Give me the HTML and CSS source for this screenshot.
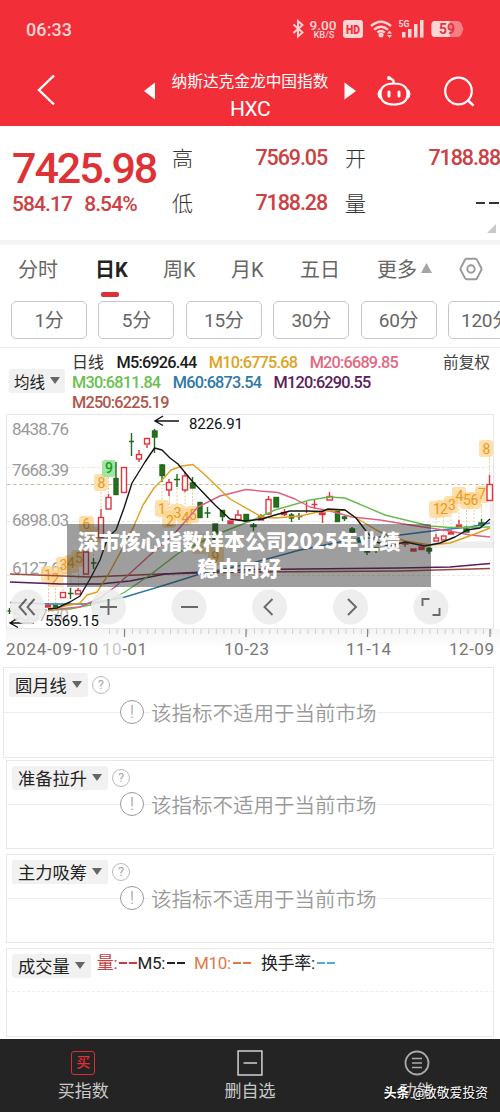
FILE: index.html
```html
<!DOCTYPE html>
<html lang="zh-CN">
<head>
<meta charset="utf-8">
<title>HXC</title>
<link rel="stylesheet" href="styles.css">
</head>
<body>
<div class="app">
  <header class="top">
    <div class="status">
      <span class="clock">06:33</span>
      <svg class="status-icons" width="176" height="24" viewBox="290 17 176 24">
        <path d="M293.5 24.500l9 8-4.500 4V21l4.500 4-9 8" fill="none" stroke="#ffd5d7" stroke-width="1.900"/>
        <g fill="#ffd5d7" font-weight="500">
          <text x="309.500" y="30" font-size="13" textLength="27" lengthAdjust="spacingAndGlyphs">9.00</text>
          <text x="313.500" y="38" font-size="9" textLength="21" lengthAdjust="spacingAndGlyphs">KB/S</text>
          <rect x="343" y="20" width="20" height="18" rx="3"/>
          <text x="346" y="33.500" font-size="12" font-weight="900" fill="#f22f38" textLength="14" lengthAdjust="spacingAndGlyphs">HD</text>
          <text x="398.500" y="27" font-size="9" font-weight="700" textLength="11" lengthAdjust="spacingAndGlyphs">5G</text>
          <rect x="402" y="32" width="3.500" height="5.500"/><rect x="408" y="29" width="3.500" height="8.500"/>
          <rect x="414" y="24" width="3.500" height="13.500"/><rect x="420" y="20" width="3.500" height="17.500"/>
          <circle cx="381" cy="35" r="2.500"/>
          <path d="M387 33.500l2.500-3 2.500 3zM387 35l2.500 3 2.500-3z"/>
        </g>
        <path d="M371 26q10-8.500 20 0M374 29.700q7-6 14 0M377.300 32.500q3.700-3 7.400 0" fill="none" stroke="#ffd5d7" stroke-width="2.300"/>
        <path d="M435 21h22q4 0 5 4l1.500 4-1.500 4q-1 4-5 4h-22q-3.500 0-3.500-4v-8q0-4 3.500-4z" fill="#f97f84"/>
        <path d="M435 21h15v16h-15q-3.500 0-3.500-4v-8q0-4 3.500-4z" fill="#ffd5d7"/>
        <text x="439" y="34" font-size="14" font-weight="700" fill="#e2353e" textLength="16" lengthAdjust="spacingAndGlyphs">59</text>
      </svg>
    </div>
    <nav class="title-bar">
      <svg class="back" width="20" height="32" viewBox="0 0 20 32"><path d="M18 1.500L3 16l15 14.500" fill="none" stroke="#fff" stroke-width="2.400"/></svg>
      <svg class="prev" width="12" height="18" viewBox="0 0 12 18"><path d="M11 .5v17L0 9z" fill="#fff"/></svg>
      <div class="titles"><span class="name">纳斯达克金龙中国指数</span><span class="code">HXC</span></div>
      <svg class="next" width="12" height="18" viewBox="0 0 12 18"><path d="M.5.5v17L12 9z" fill="#fff"/></svg>
      <svg class="bot" width="36" height="32" viewBox="0 0 36 32"><g fill="none" stroke="#fff" stroke-width="2.200"><path d="M18 8.500c9 0 13.500 3.500 13.500 10.500S27 29.500 18 29.500 4.500 26 4.500 19 9 8.500 18 8.500zM17.500 8V5.500L14 3"/></g><path d="M4 14v10Q1.500 22 1.500 19T4 14zM32 14v10q2.500-2 2.500-5T32 14z" fill="#fff"/><circle cx="13" cy="3" r="2" fill="#fff"/><rect x="11.500" y="15.500" width="3" height="7" rx="1.500" fill="#fff"/><rect x="21.500" y="15.500" width="3" height="7" rx="1.500" fill="#fff"/></svg>
      <svg class="search" width="32" height="32" viewBox="0 0 32 32"><circle cx="15.500" cy="15" r="13.300" fill="none" stroke="#fff" stroke-width="2.200"/><path d="M24.500 24l6 5.500" stroke="#fff" stroke-width="2.400"/></svg>
    </nav>
  </header>

  <section class="quote">
    <div class="price-block">
      <div class="price">7425.98</div>
      <div class="change"><span>584.17</span><span>8.54%</span></div>
    </div>
    <div class="stats">
      <span class="label">高</span><span class="num">7569.05</span><span class="label">开</span><span class="num">7188.88</span>
      <span class="label">低</span><span class="num">7188.28</span><span class="label">量</span><svg class="none" width="25" height="4" viewBox="0 0 25 4"><path d="M1 2h9M14 2h10" stroke="#333" stroke-width="1.800"/></svg>
    </div>
    <svg class="corner" width="9" height="9" viewBox="0 0 9 9"><path d="M9 0v9H0z" fill="#c8c8c8"/></svg>
  </section>

  <section class="periods">
    <div class="tabs">
      <span class="tab">分时</span><span class="tab active">日K</span><span class="tab">周K</span><span class="tab">月K</span><span class="tab">五日</span>
      <span class="tab more">更多<svg width="11" height="10" viewBox="0 0 11 10"><path d="M5.500 0L11 10H0z" fill="#a5a5a5"/></svg></span>
      <svg class="gear" width="24" height="24" viewBox="0 0 24 24" fill="none" stroke="#999" stroke-width="1.900"><path d="M7.500 1.800h9q1 0 1.500 1l4.300 8.200q.5 1 0 2L18 21.200q-.5 1-1.500 1h-9q-1 0-1.500-1L1.700 13q-.5-1 0-2L6 2.800q.5-1 1.500-1z"/><circle cx="12" cy="12" r="3.700"/></svg>
    </div>
    <div class="pills"><span>1分</span><span>5分</span><span>15分</span><span>30分</span><span>60分</span><span>120分</span></div>
  </section>

  <section class="legend">
    <span class="tag">均线<i class="caret"></i></span>
    <div class="averages">
      <div><span class="day">日线</span><span class="m5">M5:6926.44</span><span class="m10">M10:6775.68</span><span class="m20">M20:6689.85</span></div>
      <div><span class="m30">M30:6811.84</span><span class="m60">M60:6873.54</span><span class="m120">M120:6290.55</span></div>
      <div><span class="m250">M250:6225.19</span></div>
    </div>
    <span class="adjust">前复权</span>
  </section>

  <section class="chart">
    <svg width="500" height="253" viewBox="0 411 500 253">
      <defs><linearGradient id="axisbg" x2="0" y2="1"><stop offset="0" stop-color="#f4f4f4"/><stop offset="1" stop-color="#fff"/></linearGradient></defs>
      <rect x="6" y="629" width="494" height="20" fill="url(#axisbg)"/>
      <path d="M431 541.500h62v6.500h-62z" fill="#eee"/>
      <rect x="490" y="500" width="4" height="41" fill="#f0f0f0"/>
      <path d="M6.500 628.500v-214h487v214z" fill="none" stroke="#e6e6e6"/>
      <path d="M7 467.500h486M7 521.500h486M7 575.500h486" stroke="#e8e8e8" stroke-dasharray="3 2"/>
      <path d="M7 484.500h486" stroke="#c9c0a0" stroke-dasharray="3.500 2.500"/>
      <g class="ylabels">
        <text x="12" y="435" textLength="57">8438.76</text><text x="12" y="476" textLength="57">7668.39</text><text x="12" y="525.500" textLength="57">6898.03</text><text x="12" y="574" textLength="57">6127.66</text><text x="12" y="620.500" textLength="57" opacity=".65">5357.30</text>
      </g>
      <g stroke="#e0cf9a" stroke-dasharray="2 1.500">
        <path d="M48.500 585v20M55.500 588v18M63 575v18M71 573v18M78.500 570v20M101 492v18M108.500 477v18M86 530v22M93.500 526v34M162 484v16M169.500 496v24M177 488v22M185 492v26M192.500 489v22M436 518v20M443.500 516v20M451 512v20M459 505v18M466.500 510v18M474 510v18M481.500 504v18M489.500 458v18"/>
      </g>
      <g class="badge">
        <rect x="41" y="566" width="15" height="17" rx="3"/><rect x="48" y="571" width="15" height="16" rx="3"/><rect x="56" y="557" width="15" height="18" rx="3"/><rect x="64" y="555" width="15" height="18" rx="3"/><rect x="71" y="550" width="14" height="17" rx="3"/><rect x="79" y="516" width="15" height="17" rx="3"/><rect x="87" y="527" width="15" height="16" rx="3"/>
        <rect x="94" y="474" width="14" height="17" rx="3"/><rect x="155" y="500" width="14" height="17" rx="3"/><rect x="162" y="511" width="14" height="17" rx="3"/><rect x="170" y="504" width="14" height="17" rx="3"/><rect x="177" y="508" width="15" height="17" rx="3"/><rect x="186" y="506" width="13" height="17" rx="3"/><rect x="192" y="534" width="16" height="20" rx="3"/><rect x="208" y="545" width="16" height="20" rx="3"/>
        <rect x="429" y="501" width="14" height="17" rx="3"/><rect x="436" y="500" width="15" height="17" rx="3"/><rect x="444" y="496" width="14" height="17" rx="3"/><rect x="452" y="487" width="14" height="17" rx="3"/><rect x="460" y="492" width="14" height="17" rx="3"/><rect x="467" y="492" width="14" height="17" rx="3"/><rect x="475" y="486" width="14" height="17" rx="3"/><rect x="479" y="440" width="14" height="17" rx="3"/>
      </g>
      <rect x="102" y="460" width="14" height="17" rx="3" fill="#9fe6a4"/>
      <g class="count">
        <text x="48" y="580">1</text><text x="55.500" y="584">2</text><text x="63.500" y="570">3</text><text x="71" y="568">4</text><text x="79" y="563">5</text><text x="86.500" y="529">6</text><text x="101.500" y="487.500">8</text>
        <text x="162" y="514">1</text><text x="170" y="525.500">2</text><text x="177.500" y="518">3</text><text x="185.500" y="522.500">4</text><text x="193" y="519.500">5</text><text x="215.500" y="562">9</text>
        <text x="437" y="513.500">1</text><text x="444" y="513.500">2</text><text x="452" y="509.500">3</text><text x="459.500" y="500.500">4</text><text x="467" y="505">5</text><text x="474.500" y="505">6</text><text x="482" y="499">7</text><text x="486.500" y="453.500">8</text>
      </g>
      <text x="109" y="473" font-size="14" font-weight="500" text-anchor="middle" fill="#139e18">9</text>

      <g stroke="#e0353a" fill="#fff" stroke-width="1.400">
        <path d="M139 450v5M139 459v3M147 445v3M169 479v4M169 490v6M185 472v4M185 490v2M101 509v8M108.500 494v3M238 510v5M261 514v2M268.500 496v3M268.500 514v1M284.500 509v7M306.500 502v11M314.500 500v9M311.500 504.500h6M322.500 514v9M329.500 492v4M459 520v4M436 534v3M451 530v3M489.500 475v9M48 603v3M78 588v3M405 541v6"/>
        <rect x="136.500" y="454.500" width="5" height="4.500"/><rect x="144.500" y="438.500" width="5" height="5.500"/><rect x="166.500" y="482.500" width="5" height="7.500"/><rect x="182.500" y="476" width="5" height="14"/><rect x="106" y="497.500" width="5" height="11.500"/><rect x="121.500" y="467.500" width="5" height="25"/><rect x="98.500" y="517.500" width="5" height="20"/><rect x="83.500" y="552" width="5" height="22"/>
        <rect x="235.500" y="515" width="5.500" height="4.500"/><rect x="266" y="499.500" width="5" height="14.500"/><rect x="327" y="496.500" width="5.500" height="3.500"/><rect x="487" y="484.500" width="5.500" height="16"/><rect x="75.500" y="590.500" width="5" height="3.500"/><rect x="60.500" y="592.500" width="5" height="5"/><rect x="434" y="538" width="4.500" height="3"/><rect x="441.500" y="536" width="4.500" height="4"/>
        <g fill="#e0353a"><rect x="45.500" y="605.500" width="5" height="1.500"/><rect x="228" y="521" width="5" height="2.500"/><rect x="258.500" y="516" width="5" height="4"/><rect x="281.500" y="512.500" width="5" height="2"/><rect x="319.500" y="513" width="5.500" height="1.500"/><rect x="411" y="549" width="5" height="2"/><rect x="419" y="547" width="5" height="2.500"/><rect x="403" y="543" width="5" height="1"/><rect x="456.500" y="525" width="5" height="2"/><rect x="448.500" y="532" width="5" height="2"/></g>
      </g>
      <g stroke="#1f6b1b" fill="#2b6d1c" stroke-width="1.400">
        <path d="M131.500 433v23M129 441.500h5M154.500 429v24M162 464v18M177 474v13M174 479.500h6M192.500 477v6M207.500 507v11M204.500 513h6M116 462v33M253.500 523v8M291.500 513v9M299 513v7M296.500 516.500h6M344.500 516v5M352 527v8M93.500 558v11M91 563h5.500M70.500 588v11M68 593.500h5.500M9.500 608v6M7.500 611h4M367 548v7M376 547v6M429 547v7M466.500 526v6M481.500 519v6M222.500 516v5"/>
        <rect x="152.500" y="431" width="4.500" height="6"/><rect x="160" y="465" width="4.500" height="10.500"/><rect x="190.500" y="483" width="4.500" height="5"/><rect x="198" y="502.500" width="4" height="15"/><rect x="213" y="524" width="4.500" height="17"/><rect x="220.500" y="510.500" width="4" height="6"/><rect x="114" y="478.500" width="4" height="16"/><rect x="244" y="514.500" width="4.500" height="7"/><rect x="251" y="525" width="5" height="1.500"/><rect x="274" y="497.500" width="4.500" height="9.500"/><rect x="289.500" y="515" width="4" height="3"/><rect x="335.500" y="511.500" width="4" height="10"/><rect x="342.500" y="517" width="4" height="1.500"/><rect x="350" y="529" width="4.500" height="3"/><rect x="358" y="538" width="4" height="4"/><rect x="365" y="550" width="4.500" height="2"/><rect x="374" y="548" width="4.500" height="2"/><rect x="427" y="548.500" width="4.500" height="2.500"/><rect x="464" y="529" width="5" height="3"/><rect x="479" y="523" width="5" height="2"/><rect x="53.500" y="605.500" width="4" height="1.500"/>
      </g>

      <g class="lines">
        <polyline stroke="#9c4a42" points="10,574 90,577 160,574 250,572 400,571 490,568.500"/>
        <polyline stroke="#5a1c5c" points="10,582 60,584 100,584 130,581 165,574 250,569.500 400,568 450,567 490,563.500"/>
        <polyline stroke="#2f79a8" points="10,602.500 50,604 85,604 110,600 125,597 165,585 200,574 250,563.500 300,550 350,540 400,535 440,530 470,527 490,523"/>
        <polyline stroke="#66bd4e" points="48,610 70,609 90,605 110,600 125,592 150,575 180,552 220,533 253,520 275,510 310,500 329,497 345,498 385,515 430,526 450,527.500 490,527"/>
        <polyline stroke="#df6080" points="48,610 80,607 100,598 115,587 150,555 175,533 198,507 220,496 246,489.500 260,491 278,492.500 295,499 310,507 330,511 352,517 380,520 410,525 450,531 470,535 490,537"/>
        <polyline stroke="#e0a01e" points="48,611 65,606 80,603 87,595 97,592 108,575 120,553 133,528 143,505 154,488 163,479 171,470 182,466 193,464.500 203,473 230,499 262,517 275,518 300,516 322,511 345,510 356,518 380,532 405,541 430,545 450,543 475,534 490,528"/>
        <polyline stroke="#151515" points="48,609 57,608 70,602 80,596 90,579 100,560 108,537 116,530 124,508 132,483 145,462 154.500,448 162,450 170,458 178,464 192,481 215,505 230,519 245,521 262,519 275,515 290,511 307,511 322,511.500 328,509 345,510 356,518 366,531 376,542 390,546 405,542 425,546 440,543 455,537 467,530 480,528 490,519"/>
      </g>
      <path d="M179 421h-24M163 416l-8 5 8 4.500M34 623H10M18 618l-8 5 8 4.500" fill="none" stroke="#111" stroke-width="1.400"/>
      <text class="mark" x="189" y="429" textLength="54">8226.91</text>
      <g opacity=".88"><g fill="#ececec"><circle cx="27.500" cy="607" r="17.500"/><circle cx="108.500" cy="607" r="17.500"/><circle cx="189" cy="607" r="17.500"/><circle cx="269.500" cy="607" r="17.500"/><circle cx="350.500" cy="607" r="17.500"/><circle cx="431" cy="607" r="17.500"/></g>
      <path d="M26.500 599l-7 8 7 8M34.500 599l-7 8 7 8M100 607h17M108.500 599v16M181 607h17M272.500 599l-8 8 8 8M348 599l8 8-8 8M422.500 606v-7h7M432.500 615h7v-7" fill="none" stroke="#555" stroke-width="1.900"/></g>
      <text class="mark" x="45" y="626" textLength="54">5569.15</text>
      <path d="M109 631.500h385" stroke="#cfcfcf" stroke-width="5" stroke-dasharray="1 6.630"/>
      <path d="M124.500 629v8M246 629v8M367.500 629v8M490 629v8" stroke="#888" stroke-width="1.200"/>
      <g class="xlabels"><text x="6" y="654.500" textLength="92">2024-09-10</text><text x="102" y="654.500" textLength="45"><tspan fill="#c9c9c9">10</tspan>-01</text><text x="224" y="654.500" textLength="45">10-23</text><text x="346" y="654.500" textLength="45">11-14</text><text x="449" y="654.500" textLength="45">12-09</text></g>
    </svg>
    <div class="caption">深市核心指数样本公司2025年业绩<br>稳中向好</div>
  </section>

  <section class="panel first">
    <div class="panel-head"><span class="tag">圆月线<i class="caret"></i></span><span class="help">?</span></div>
    <div class="notice"><span class="warn">!</span><span>该指标不适用于当前市场</span></div>
  </section>
  <section class="panel second">
    <div class="panel-head"><span class="tag">准备拉升<i class="caret"></i></span><span class="help">?</span></div>
    <div class="notice"><span class="warn">!</span><span>该指标不适用于当前市场</span></div>
  </section>
  <section class="panel third">
    <div class="panel-head"><span class="tag">主力吸筹<i class="caret"></i></span><span class="help">?</span></div>
    <div class="notice"><span class="warn">!</span><span>该指标不适用于当前市场</span></div>
  </section>
  <section class="panel volume">
    <div class="panel-head"><span class="tag">成交量<i class="caret"></i></span>
      <div class="vol-values"><span class="v1">量:<b></b><b></b></span><span class="v2">M5:<b></b><b></b></span><span class="v3">M10:<b></b><b></b></span><span class="v4">换手率:<b></b><b></b></span></div>
    </div>
    <div class="midline"></div>
  </section>

  <footer class="bottom">
    <div class="action"><span class="buy">买</span><span>买指数</span></div>
    <div class="action"><svg width="24" height="24" viewBox="0 0 24 24" fill="none" stroke="#d0d0d0" stroke-width="1.400"><path d="M1 1h22v22H1zM6 12h12.500"/></svg><span>删自选</span></div>
    <div class="action"><svg width="26" height="26" viewBox="0 0 26 26" fill="none" stroke="#aaa" stroke-width="1.800"><circle cx="13" cy="13" r="11.500"/><path d="M8 8.500h10M8 13h10M8 17.500h10" stroke-width="1.500"/></svg><span>功能</span></div>
    <div class="watermark"><strong>头条</strong> @敬敬爱投资</div>
  </footer>
</div>
</body>
</html>
```

FILE: styles.css
```css
* { box-sizing: border-box; }
body { margin: 0; background: #fff; font-family: Roboto, "Noto Sans CJK SC", sans-serif; color: #333; }
svg { display: block; flex: none; }
.app { width: 500px; height: 1112px; overflow: hidden; display: flex; flex-direction: column; }
.app > * { flex: none; }

.top { height: 126px; background: #f22f38; color: #fff; }
.status { height: 56px; padding: 17px 34px 0 26px; display: flex; justify-content: space-between; }
.clock { font-size: 18px; line-height: 25px; letter-spacing: .1px; font-weight: 500; color: #ffd5d7; }
.status-icons text { font-family: Roboto, sans-serif; }
.title-bar { display: flex; height: 70px; padding-left: 36px; align-items: flex-start; }
.back { margin-top: 18px; }
.prev { margin: 26px 0 0 88px; }
.titles { width: 188px; display: flex; flex-direction: column; align-items: center; }
.name { font-size: 15.700px; line-height: 22px; margin-top: 15px; white-space: nowrap; }
.code { font-size: 21px; line-height: 24px; margin-top: 4px; letter-spacing: -.6px; }
.next { margin-top: 26px; }
.bot { margin: 19px 0 0 20px; }
.search { margin: 20px 0 0 31px; }

.quote { height: 119px; border-bottom: 5px solid #f4f4f4; padding-left: 12px; display: flex; position: relative; }
.price-block { width: 160px; padding-top: 18px; white-space: nowrap; }
.price { font-size: 43px; line-height: 48px; font-weight: 500; color: #df3236; letter-spacing: -2.050px; }
.change { display: flex; gap: 12px; font-size: 21px; line-height: 24px; font-weight: 500; color: #cc4143; letter-spacing: -.9px; }
.stats { width: 328px; height: 90px; padding-top: 9px; display: grid; grid-template-columns: 32px 123px 35px 138px; grid-template-rows: 45px 45px; align-items: center; }
.label { font-size: 21px; font-weight: 300; color: #333; position: relative; top: -1px; }
.stats .label:nth-child(4n+3) { padding-left: 18px; }
.stats .num { justify-self: end; font-size: 21.500px; font-weight: 500; color: #cc4143; letter-spacing: -1.100px; }
.none { justify-self: end; }
.corner { position: absolute; right: 4px; bottom: 7px; }

.periods { height: 103px; border-bottom: 1px solid #eaeaea; }
.tabs { display: flex; height: 49px; padding-left: 18px; }
.tab { font-size: 20px; line-height: 50px; color: #666; width: 61px; white-space: nowrap; margin-right: 11px; }
.tab:nth-child(1) { width: 77px; margin: 0; }
.tab:nth-child(2) { width: 68px; margin: 0; }
.tab:nth-child(3) { width: 68px; margin: 0; }
.tab:nth-child(4) { width: 69px; margin: 0; }
.tab:nth-child(5) { width: 77px; margin: 0; }
.tab.more { display: flex; gap: 4px; width: 82px; margin: 0; }
.more svg { margin-top: 18px; }
.tab.active { color: #222; font-weight: 700; position: relative; }
.active::after { content: ""; position: absolute; left: 6px; bottom: -3px; width: 18px; height: 5px; border-radius: 2px; background: #dc3237; }
.gear { margin-top: 12px; }
.pills { display: flex; gap: 11.400px; padding: 7px 0 0 11px; overflow: hidden; }
.pills span { flex: none; width: 76px; height: 38px; border: 1px solid #c6c6c6; border-radius: 5px; text-align: center; font-size: 19px; line-height: 38px; color: #666; letter-spacing: -.3px; white-space: nowrap; }

.legend { height: 63px; display: flex; padding-left: 9px; }
.tag { display: inline-flex; align-items: center; gap: 5px; height: 24px; padding: 0 6px 1px; background: #f1f1f1; border-radius: 3px; color: #222; white-space: nowrap; }
.caret { width: 0; height: 0; border: 5px solid transparent; border-top: 7px solid #666; border-bottom: 0; }
.legend .tag { width: 56px; margin: 21px 7px 0 0; padding: 0 5px 1px; font-size: 15.500px; }
.averages { width: 371px; padding-top: 5px; font-size: 16.300px; font-weight: 500; letter-spacing: -.8px; }
.averages div { display: flex; gap: 12.500px; height: 20px; line-height: 20px; white-space: nowrap; }
.averages .day { font-weight: 400; font-size: 16px; letter-spacing: 0; }
.m5 { color: #1c1c1c; } .m10 { color: #e0a322; } .m20 { color: #e26882; }
.m30 { color: #6abf50; } .m60 { color: #2f78a6; } .m120 { color: #5b205c; } .m250 { color: #b1554a; }
.adjust { font-size: 15.700px; line-height: 22px; padding-top: 4px; color: #444; }

.chart { position: relative; height: 253px; }
.chart text { font-family: Roboto, sans-serif; }
.ylabels { fill: #999; font-size: 17px; }
.xlabels { fill: #777; font-size: 17px; }
.mark { fill: #111; font-size: 15px; }
.badge { fill: #ffd38c; fill-opacity: .72; }
.count { fill: #e89a20; font-size: 14px; text-anchor: middle; }
.lines { fill: none; stroke-width: 1.400; stroke-linejoin: round; }
.caption { position: absolute; left: 67px; top: 113px; width: 364px; height: 63px; padding: 3px 20px 0 0; background: rgba(40,40,40,.45); color: #fff; text-align: center; font: 900 20.900px/27px "Noto Sans CJK SC", sans-serif; white-space: nowrap; }

.panel { border: 1px solid #e8e8e8; margin: 0 6px 0 6px; position: relative; }
.panel-head { display: flex; align-items: center; padding: 5px 0 0 5px; }
.panel .tag { font-size: 17.300px; }
.first { height: 91px; margin: 3px 6px 0 3px; }
.second { height: 89px; margin-top: 2px; }
.third { height: 89px; margin-top: 5px; }
.volume { height: 89px; margin-top: 5px; }
.help { width: 18px; height: 18px; border: 1.500px solid #bbb; border-radius: 50%; margin-left: 4px; color: #aaa; font-size: 13px; line-height: 16px; text-align: center; }
.notice { display: flex; align-items: center; height: 30px; padding-left: 113px; gap: 7px; color: #999; font-size: 20.500px; font-weight: 350; white-space: nowrap; background: linear-gradient(#eee,#eee) 0 15px / 100% 1px no-repeat; }
.second .notice, .third .notice { margin-top: -1px; }
.notice span:last-child { background: #fff; }
.first .notice { padding-left: 116px; }
.warn { width: 24px; height: 24px; border: 1.500px solid #999; border-radius: 50%; background: #fff; text-align: center; line-height: 21px; font-size: 18px; }
.vol-values { display: flex; font-size: 17px; line-height: 22px; padding-left: 6px; white-space: nowrap; margin-top: -7px; letter-spacing: -.3px; }
.vol-values span { display: flex; align-items: center; }
.vol-values b { width: 8px; height: 2px; margin-left: 2px; background: currentColor; }
.v1 { color: #c43e40; } .v2 { color: #222; } .v3 { color: #e27745; margin-left: 9px; } .v4 { color: #222; margin-left: 10px; }
.vol-values .v4 b { background: #4faedb; }
.midline { border-top: 1px dashed #eee; margin-top: 13px; }

.bottom { height: 74px; margin-top: 2px; background: #242424; display: flex; position: relative; padding-top: 11px; }
.action { flex: 1; display: flex; flex-direction: column; align-items: center; font-size: 17px; line-height: 24px; color: #c9c9c9; }
.action > :first-child { width: 26px; height: 26px; margin-bottom: 3px; }
.action .buy { width: 24px; height: 24px; margin: 1px 0 4px; border: 1.500px solid #d92d38; border-radius: 3px; color: #e32f3a; font-size: 14px; line-height: 21px; text-align: center; font-weight: 500; }
.watermark { position: absolute; right: 12px; top: 44px; color: #fff; font-size: 12.800px; line-height: 20px; text-shadow: 1px 1px 1px #000; white-space: nowrap; }
```
